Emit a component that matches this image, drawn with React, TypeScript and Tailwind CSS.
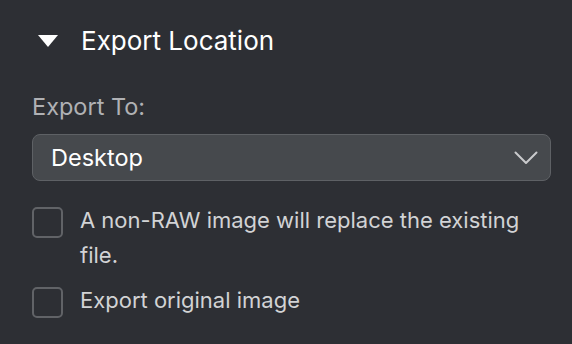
function Check({ label }: { label: string }) {
  return (
    <label className="flex items-start gap-[17px]">
      <span className="h-[31px] w-[31px] shrink-0 rounded-[5px] border-2 border-[#616367]" />
      <span className="-mt-[4px] text-[22px] leading-[35px] text-[#d2d3d5]">{label}</span>
    </label>
  );
}

export default function App() {
  return (
    <div className="h-[344px] w-[572px] bg-[#2d2f34] pl-[32px] pr-[21px] pt-[23px] font-['Inter',sans-serif]">
      <div className="flex items-center">
        <svg width="20" height="12" viewBox="0 0 20 12" className="ml-[6px] mr-[23px]">
          <path d="M0 0 L20 0 L10 12 Z" fill="#ffffff" />
        </svg>
        <h2 className="text-[26px] leading-[36px] text-white">Export Location</h2>
      </div>
      <div className="mt-[34px] text-[23.5px] leading-[28px] text-[#b0b1b4]">Export To:</div>
      <div className="mt-[13px] flex h-[47px] items-center justify-between rounded-[8px] border-[1.5px] border-[#5e6165] bg-[#46494d] pl-[18px] pr-[12px]">
        <span className="text-[23.5px] text-white">Desktop</span>
        <svg width="24" height="14" viewBox="0 0 24 14" fill="none">
          <path d="M1.5 1.5 L12 12 L22.5 1.5" stroke="#c9cacc" strokeWidth="2" strokeLinecap="round" strokeLinejoin="round" />
        </svg>
      </div>
      <div className="mt-[26px] flex flex-col gap-[14px]">
        <Check label="A non-RAW image will replace the existing file." />
        <Check label="Export original image" />
      </div>
    </div>
  );
}
